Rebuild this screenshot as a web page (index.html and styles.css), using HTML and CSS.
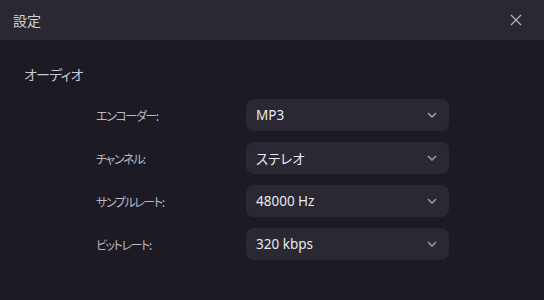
FILE: index.html
```html
<!DOCTYPE html>
<html lang="ja">
<head>
<meta charset="utf-8">
<link rel="stylesheet" href="styles.css">
</head>
<body>
<div class="dialog">
  <div class="header">
    <span class="title">設定</span>
    <svg class="close" width="12" height="12" viewBox="0 0 12 12"><path d="M1 1L11 11M11 1L1 11" stroke="#b4b4bd" stroke-width="1.2" fill="none"/></svg>
  </div>
  <div class="content">
    <div class="section-title">オーディオ</div>
    <div class="rows">
      <div class="row"><span class="label">エンコーダー:</span><div class="select"><span>MP3</span><svg class="chev" width="10" height="6" viewBox="0 0 10 6"><path d="M1 1L5 5L9 1" stroke="#9c9ba6" stroke-width="1.5" fill="none"/></svg></div></div>
      <div class="row"><span class="label">チャンネル:</span><div class="select"><span>ステレオ</span><svg class="chev" width="10" height="6" viewBox="0 0 10 6"><path d="M1 1L5 5L9 1" stroke="#9c9ba6" stroke-width="1.5" fill="none"/></svg></div></div>
      <div class="row"><span class="label">サンプルレート:</span><div class="select"><span>48000 Hz</span><svg class="chev" width="10" height="6" viewBox="0 0 10 6"><path d="M1 1L5 5L9 1" stroke="#9c9ba6" stroke-width="1.5" fill="none"/></svg></div></div>
      <div class="row"><span class="label">ビットレート:</span><div class="select"><span>320 kbps</span><svg class="chev" width="10" height="6" viewBox="0 0 10 6"><path d="M1 1L5 5L9 1" stroke="#9c9ba6" stroke-width="1.5" fill="none"/></svg></div></div>
    </div>
  </div>
</div>
</body>
</html>
```
FILE: styles.css
```css
html, body {
  margin: 0;
  padding: 0;
  background: #1c1b24;
}
body {
  width: 544px;
  height: 300px;
  overflow: hidden;
  font-family: "Noto Sans CJK JP", "Noto Sans", sans-serif;
  font-feature-settings: "palt";
}
.dialog {
  width: 544px;
  height: 300px;
}
.header {
  height: 40px;
  background: #2a2933;
  display: flex;
  align-items: center;
  justify-content: space-between;
  padding: 0 22px 0 13px;
}
.title {
  color: #d2d1d9;
  font-size: 14px;
  line-height: 20px;
}
.close {
  display: block;
}
.content {
  padding: 25px 0 0 24px;
}
.section-title {
  color: #c9c8d3;
  font-size: 14px;
  line-height: 18px;
  letter-spacing: -0.8px;
}
.rows {
  margin-top: 16px;
  padding-left: 72px;
  display: flex;
  flex-direction: column;
  gap: 11px;
}
.row {
  display: flex;
  align-items: center;
  height: 32px;
}
.label {
  width: 150px;
  color: #b9b8c4;
  font-size: 12px;
  letter-spacing: -1.4px;
}
.select {
  width: 203px;
  height: 32px;
  box-sizing: border-box;
  background: #2a2933;
  border-radius: 8px;
  display: flex;
  align-items: center;
  justify-content: space-between;
  padding: 0 12px 0 10px;
  color: #e8e8f0;
  font-size: 13.5px;
  font-family: "Noto Sans", "Noto Sans CJK JP", sans-serif;
}
.chev {
  display: block;
}
```
